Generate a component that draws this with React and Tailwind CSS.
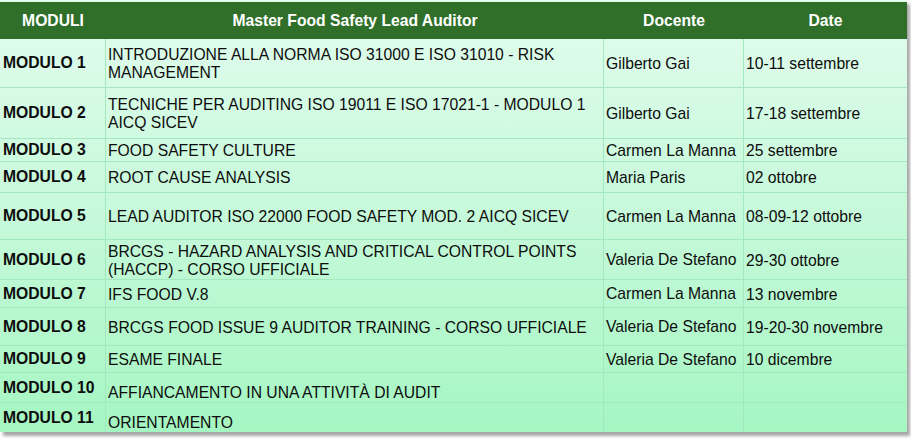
import React from 'react';

// righe del programma: altezze prese dallo screenshot
const rows = [
    { mod: 'MODULO 1', title: 'INTRODUZIONE ALLA NORMA ISO 31000 E ISO 31010 - RISK MANAGEMENT', doc: 'Gilberto Gai', date: '10-11 settembre', h: 'h-[49px]' },
    { mod: 'MODULO 2', title: 'TECNICHE PER AUDITING ISO 19011 E ISO 17021-1 - MODULO 1 AICQ SICEV', doc: 'Gilberto Gai', date: '17-18 settembre', h: 'h-[51px]' },
    { mod: 'MODULO 3', title: 'FOOD SAFETY CULTURE', doc: 'Carmen La Manna', date: '25 settembre', h: 'h-[23px]' },
    { mod: 'MODULO 4', title: 'ROOT CAUSE ANALYSIS', doc: 'Maria Paris', date: '02 ottobre', h: 'h-[31px]' },
    { mod: 'MODULO 5', title: 'LEAD AUDITOR ISO 22000 FOOD SAFETY MOD. 2 AICQ SICEV', doc: 'Carmen La Manna', date: '08-09-12 ottobre', h: 'h-[47px]' },
    { mod: 'MODULO 6', title: 'BRCGS - HAZARD ANALYSIS AND CRITICAL CONTROL POINTS (HACCP) - CORSO UFFICIALE', doc: 'Valeria De Stefano', date: '29-30 ottobre', h: 'h-[40px]' },
    { mod: 'MODULO 7', title: 'IFS FOOD V.8', doc: 'Carmen La Manna', date: '13 novembre', h: 'h-[28px]' },
    { mod: 'MODULO 8', title: 'BRCGS FOOD ISSUE 9 AUDITOR TRAINING - CORSO UFFICIALE', doc: 'Valeria De Stefano', date: '19-20-30 novembre', h: 'h-[38px]' },
    { mod: 'MODULO 9', title: 'ESAME FINALE', doc: 'Valeria De Stefano', date: '10 dicembre', h: 'h-[27px]' },
    { mod: 'MODULO 10', title: 'AFFIANCAMENTO IN UNA ATTIVITÀ DI AUDIT', doc: '', date: '', h: 'h-[30px]', low: true },
    { mod: 'MODULO 11', title: 'ORIENTAMENTO', doc: '', date: '', h: 'h-[29px]', low: true },
];

const cols = 'grid grid-cols-[106px_498px_140px_163px]';

const Cell = ({ children, className = '', last = false }) => (
    <div className={`flex px-[2px] leading-[18px] ${last ? '' : 'border-r border-[#a3e8be]'} ${className}`}>
        {children}
    </div>
);

export default function App() {
    return (
        <div className="w-[911px] h-[438px] bg-white font-['Liberation_Sans',Arial,sans-serif] text-[15.7px] text-[#0d0d0d]">
            <div className="w-[907px] h-[432px] pt-[2px] bg-gradient-to-b from-[#e2fcee] via-[#c6f9da] to-[#a5f6c2] shadow-[3px_4px_3px_rgba(0,0,0,0.35)] flex flex-col">
                {/* intestazione */}
                <div className={`${cols} h-[37px] bg-[#2f6f29] text-white font-bold`}>
                    <div className="flex items-center justify-center">MODULI</div>
                    <div className="flex items-center justify-center">Master Food Safety Lead Auditor</div>
                    <div className="flex items-center justify-center">Docente</div>
                    <div className="flex items-center justify-center">Date</div>
                </div>

                {rows.map((r, i) => (
                    <div
                        key={r.mod}
                        className={`${cols} ${r.h} ${i < rows.length - 1 ? 'border-b border-[#a3e8be]' : ''}`}
                    >
                        <Cell className="items-center font-bold pl-[3px]">{r.mod}</Cell>
                        <Cell className={r.low ? 'items-end pb-0' : 'items-center pt-[2px]'}>{r.title}</Cell>
                        <Cell className="items-center pt-[1px]">{r.doc}</Cell>
                        <Cell className="items-center pt-[2px]" last>{r.date}</Cell>
                    </div>
                ))}
            </div>
        </div>
    );
}
